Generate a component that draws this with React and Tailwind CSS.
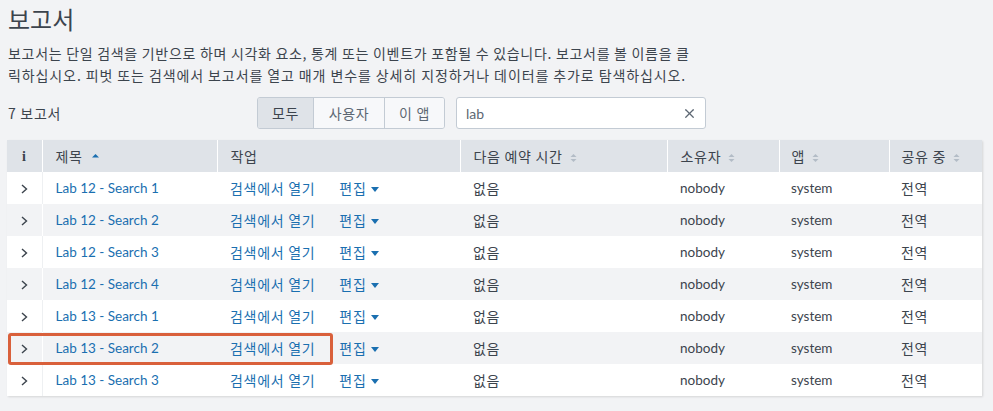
import { X } from 'lucide-react'

const rows = [
  'Lab 12 - Search 1',
  'Lab 12 - Search 2',
  'Lab 12 - Search 3',
  'Lab 12 - Search 4',
  'Lab 13 - Search 1',
  'Lab 13 - Search 2',
  'Lab 13 - Search 3',
]

const SortIcon = () => (
  <svg width="7" height="10" viewBox="0 0 7 10" className="inline-block ml-[7px] align-[-1px]">
    <path d="M0.5 4 L3.5 1 L6.5 4 Z" fill="#b3bcc6" />
    <path d="M0.5 6 L3.5 9 L6.5 6 Z" fill="#b3bcc6" />
  </svg>
)

const Caret = () => (
  <svg width="8" height="5" viewBox="0 0 8 5" className="inline-block ml-[4px] align-[2px]">
    <path d="M0 0 L8 0 L4 5 Z" fill="#1a6fb0" />
  </svg>
)

const ko = "font-['Noto_Sans_CJK_KR',sans-serif] tracking-[0.7px]"

const App = () => {
  return (
    <div className="relative w-[993px] h-[411px] bg-[#f2f3f5] text-[#3c444d] font-['Lato','Noto_Sans_CJK_KR',sans-serif] overflow-hidden">
      <div className="px-[8px] pt-[2px]">
        <h1 className="text-[24px] leading-[34px] font-['Noto_Sans_CJK_KR',sans-serif] font-normal text-[#3c444d]">보고서</h1>
        <p className={`mt-[6px] text-[14px] leading-[22px] text-[#3c444d] ${ko}`}>
          보고서는 단일 검색을 기반으로 하며 시각화 요소, 통계 또는 이벤트가 포함될 수 있습니다. 보고서를 볼 이름을 클
          <br />
          <span className="tracking-[0.9px]">릭하십시오. 피벗 또는 검색에서 보고서를 열고 매개 변수를 상세히 지정하거나 데이터를 추가로 탐색하십시오.</span>
        </p>
      </div>

      {/* Controls */}
      <div className="flex items-center h-[32px] mt-[11px]">
        <div className={`w-[257px] pl-[8px] text-[14px] ${ko}`}>7 보고서</div>
        <div className={`flex h-[32px] border border-[#c3cbd4] rounded-[3px] overflow-hidden text-[14px] ${ko}`}>
          <div className="w-[56px] flex items-center justify-center bg-[#dfe3e8] border-r border-[#c3cbd4]">모두</div>
          <div className="w-[71px] flex items-center justify-center bg-[#f7f8fa] border-r border-[#c3cbd4] text-[#5c6773]">사용자</div>
          <div className="w-[59px] flex items-center justify-center bg-[#f7f8fa] text-[#5c6773]">이 앱</div>
        </div>
        <div className="ml-[11px] w-[250px] h-[32px] bg-white border border-[#c3cbd4] rounded-[3px] flex items-center pl-[9px] pr-[8px]">
          <span className="flex-1 text-[14px] text-[#5c6773]">lab</span>
          <X size={15} strokeWidth={2} className="text-[#5c6773]" />
        </div>
      </div>

      {/* Table */}
      <div className="ml-[7px] mt-[11px] w-[975px] shadow-[1px_1px_2px_rgba(0,0,0,0.12)]">
        <table className="w-full table-fixed border-collapse text-[13.5px]">
          <colgroup>
            <col className="w-[35px]" />
            <col className="w-[175px]" />
            <col className="w-[243px]" />
            <col className="w-[207px]" />
            <col className="w-[112px]" />
            <col className="w-[110px]" />
            <col className="w-[93px]" />
          </colgroup>
          <thead>
            <tr className={`h-[32px] bg-[#dfe3e8] text-left text-[14px] ${ko}`}>
              <th className="text-center font-['Liberation_Serif',serif] font-bold text-[14px] border-r border-white">i</th>
              <th className="pl-[13px] font-normal border-r border-white">
                제목
                <svg width="7" height="5" viewBox="0 0 7 5" className="inline-block ml-[9px] align-[4px]">
                  <path d="M0 4.5 L3.5 1 L7 4.5 Z" fill="#1a6fb0" />
                </svg>
              </th>
              <th className="pl-[13px] font-normal border-r border-white">작업</th>
              <th className="pl-[13px] font-normal border-r border-white">다음 예약 시간<SortIcon /></th>
              <th className="pl-[13px] font-normal border-r border-white">소유자<SortIcon /></th>
              <th className="pl-[12px] font-normal border-r border-white">앱<SortIcon /></th>
              <th className="pl-[12px] font-normal">공유 중<SortIcon /></th>
            </tr>
          </thead>
          <tbody>
            {rows.map((name, i) => (
              <tr key={name} className={`h-[32px] ${i % 2 === 1 ? 'bg-[#f2f3f5]' : 'bg-white'}`}>
                <td className={`text-center border-r ${i % 2 === 1 ? 'border-white' : 'border-[#eef0f2]'}`}>
                  <svg width="7" height="10" viewBox="0 0 7 10" className="inline-block">
                    <path d="M1 1 L5.5 5 L1 9" fill="none" stroke="#3c444d" strokeWidth="1.4" />
                  </svg>
                </td>
                <td className="pl-[13px] text-[#1a6fb0]">{name}</td>
                <td className={`pl-[13px] text-[#1a6fb0] text-[14px] ${ko}`}>
                  <span>검색에서 열기</span>
                  <span className="ml-[24px]">편집<Caret /></span>
                </td>
                <td className={`pl-[13px] text-[14px] ${ko}`}>없음</td>
                <td className="pl-[13px]">nobody</td>
                <td className="pl-[12px]">system</td>
                <td className={`pl-[12px] text-[14px] ${ko}`}>전역</td>
              </tr>
            ))}
          </tbody>
        </table>
      </div>

      {/* Annotation highlight */}
      <div className="absolute left-[8px] top-[333px] w-[325px] h-[32px] border-[3px] border-[#d9603b] rounded-[3px] pointer-events-none" />
    </div>
  )
}

export default App
